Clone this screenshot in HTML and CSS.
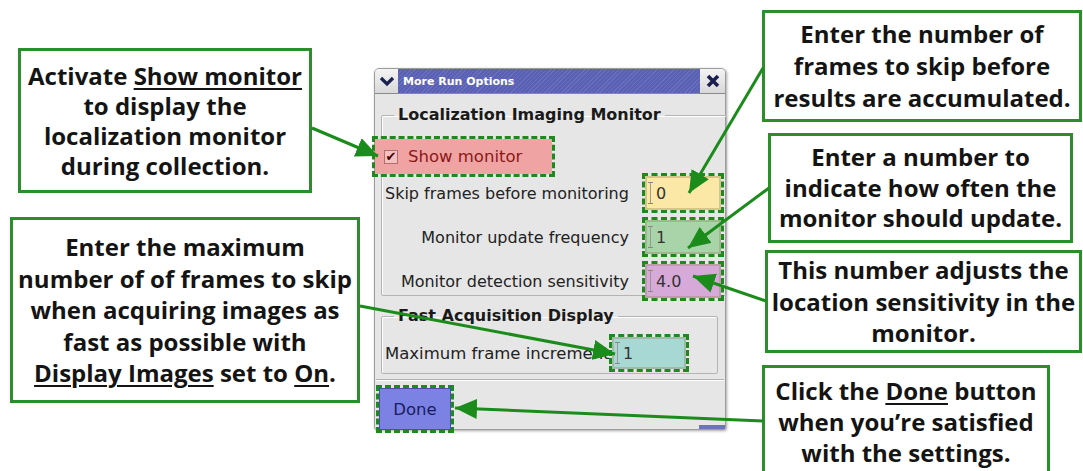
FILE: index.html
```html
<!DOCTYPE html>
<html lang="en">
  <head>
    <meta charset="UTF-8" />
    <meta name="viewport" content="width=device-width, initial-scale=1.0" />
    <title>More Run Options</title>
    <link rel="stylesheet" href="styles.css">
  </head>
  <body>
    <div class="canvas">
      <div class="dialog">
        <div class="titlebar">
          <span class="tb-btn">
            <svg width="16" height="12" viewBox="0 0 16 12"><path d="M2 3 L8 9 L14 3" fill="none" stroke="#1c2050" stroke-width="3.2"/></svg>
          </span>
          <span class="title">More Run Options</span>
          <span class="tb-btn close">
            <svg width="14" height="14" viewBox="0 0 14 14"><path d="M2 2 L12 12 M12 2 L2 12" stroke="#1c2050" stroke-width="3.6"/></svg>
          </span>
        </div>
        <div class="body">
          <fieldset class="group">
            <legend>Localization Imaging Monitor</legend>
            <label class="check mark pink"><span class="box">&#10004;</span>Show monitor</label>
            <div class="rows">
              <span class="lbl">Skip frames before monitoring</span>
              <span class="field mark yellow"><i class="caret"></i>0</span>
              <span class="lbl">Monitor update frequency</span>
              <span class="field mark green"><i class="caret"></i>1</span>
              <span class="lbl">Monitor detection sensitivity</span>
              <span class="field mark purple"><i class="caret"></i>4.0</span>
            </div>
          </fieldset>
          <fieldset class="group second">
            <legend>Fast Acquisition Display</legend>
            <div class="inline-row">
              <span class="lbl wide">Maximum frame increment</span>
              <span class="field mark teal small"><i class="caret"></i>1</span>
            </div>
          </fieldset>
          <div class="sep"></div>
          <div class="actions">
            <button class="done mark">Done</button>
          </div>
        </div>
        <span class="grip"></span>
      </div>

      <div class="callout c1"><p>Activate <u>Show monitor</u><br>to display the<br>localization monitor<br>during collection.</p></div>
      <div class="callout c2"><p>Enter the maximum<br>number of of frames to skip<br>when acquiring images as<br>fast as possible with<br><u>Display Images</u> set to <u>On</u>.</p></div>
      <div class="callout c3"><p>Enter the number of<br>frames to skip before<br>results are accumulated.</p></div>
      <div class="callout c4"><p>Enter a number to<br>indicate how often the<br>monitor should update.</p></div>
      <div class="callout c5"><p>This number adjusts the<br>location sensitivity in the<br>monitor.</p></div>
      <div class="callout c6"><p>Click the <u>Done</u> button<br>when you&rsquo;re satisfied<br>with the settings.</p></div>

      <svg class="arrows" width="1083" height="471" viewBox="0 0 1083 471">
        <defs>
          <marker id="head" markerUnits="userSpaceOnUse" markerWidth="24" markerHeight="20" refX="22" refY="10" orient="auto">
            <path d="M0 0 L22 10 L0 20 Z" fill="#1b8c1b"/>
          </marker>
        </defs>
        <g stroke="#1b8c1b" stroke-width="3" fill="none" marker-end="url(#head)">
          <line x1="312" y1="128" x2="378" y2="156"/>
          <line x1="763" y1="68" x2="689" y2="193"/>
          <line x1="769" y1="188" x2="688" y2="248"/>
          <line x1="766" y1="301" x2="693" y2="276"/>
          <line x1="360" y1="306" x2="615" y2="354"/>
          <line x1="763" y1="421" x2="455" y2="408"/>
        </g>
      </svg>
    </div>
  </body>
</html>
```

FILE: styles.css
```css
* {
  box-sizing: border-box;
}
body {
  margin: 0;
  background: #fff;
}
.canvas {
  position: relative;
  width: 1083px;
  height: 471px;
  overflow: hidden;
  background: #fff;
}

/* dialog */
.dialog {
  position: absolute;
  left: 374px;
  top: 68px;
  width: 352px;
  height: 362px;
  background: #e6e6e6;
  border: 1px solid #9c9c9c;
  border-radius: 5px 5px 3px 3px;
  box-shadow: 1px 1px 3px rgba(0, 0, 0, 0.35);
  font-family: "DejaVu Sans", sans-serif;
}
.titlebar {
  display: flex;
  height: 25px;
  border-bottom: 1px solid #8a8a8a;
}
.tb-btn {
  display: flex;
  align-items: center;
  justify-content: center;
  width: 23px;
  background: linear-gradient(#f4f4f4, #d8d8d8);
  border-radius: 4px 0 0 0;
}
.tb-btn.close {
  width: 25px;
  border-radius: 0 4px 0 0;
}
.title {
  flex: 1;
  display: flex;
  align-items: center;
  padding-left: 5px;
  color: #fff;
  font-size: 11px;
  font-weight: bold;
  background-color: #5a61b4;
  background-image: repeating-linear-gradient(135deg, rgba(255, 255, 255, 0.09) 0 1px, transparent 1px 3px);
}
.body {
  padding: 10px 7px 0 6px;
}
.group {
  margin: 0;
  padding: 13px 5px 0 3px;
  border: 1px solid #b4b4b4;
  box-shadow: inset 1px 1px 0 #fff;
  border-radius: 2px;
}
.group legend {
  margin-left: 9px;
  padding: 0 4px;
  font-size: 16px;
  line-height: 22px;
  font-weight: bold;
  color: #1a1a1a;
}
.mark {
  outline: 3px dashed #1e8a1e;
}
.check {
  display: flex;
  align-items: center;
  gap: 10px;
  width: 177px;
  height: 35px;
  margin-left: -10px;
  padding-left: 9px;
  background: #f0a3a3;
  color: #8a1818;
  font-size: 16.5px;
}
.box {
  display: flex;
  align-items: center;
  justify-content: center;
  width: 14px;
  height: 14px;
  border: 1px solid #b07070;
  background: #f6c0c0;
  color: #4a0000;
  font-size: 13px;
  line-height: 1;
}
.rows {
  display: grid;
  grid-template-columns: auto 76px;
  column-gap: 16px;
  row-gap: 10px;
  align-items: center;
  margin: 2px 0 -3px;
}
.lbl {
  justify-self: end;
  font-size: 16px;
  color: #222;
  white-space: nowrap;
}
.lbl.wide {
  font-size: 16.5px;
}
.field {
  display: flex;
  align-items: center;
  gap: 3px;
  height: 34px;
  padding-left: 3px;
  font-size: 16px;
  color: #333;
  box-shadow: inset 0 0 0 2px rgba(150, 130, 90, 0.35);
}
.caret {
  display: block;
  width: 5px;
  height: 22px;
  border-top: 1px solid #888;
  border-bottom: 1px solid #888;
  background: linear-gradient(#999, #999) center / 1px 100% no-repeat;
}
.yellow { background: #fbe8a6; }
.green { background: #a9d4a9; }
.purple { background: #d7a9d8; }
.teal { background: #a8d8d4; }
.field.small {
  width: 74px;
  height: 32px;
  margin-left: auto;
}
.group.second {
  margin-top: 9px;
  padding: 10px 5px 4px 3px;
}
.inline-row {
  display: flex;
  align-items: center;
  padding-right: 26px;
}
.sep {
  margin: 5px -6px 0 -5px;
  border-top: 1px solid #b0b0b0;
  border-bottom: 1px solid #fff;
}
.actions {
  padding-top: 7px;
}
.done {
  display: block;
  width: 72px;
  height: 42px;
  margin-left: -2px;
  background: #7b82e4;
  border: 1px solid #4a4fae;
  color: #1a1c5c;
  font-family: "DejaVu Sans", sans-serif;
  font-size: 16.5px;
  padding: 0;
}
.grip {
  position: absolute;
  right: 0;
  bottom: 0;
  width: 26px;
  height: 4px;
  background: #6d73c0;
}

/* callouts */
.callout {
  position: absolute;
  display: flex;
  align-items: center;
  justify-content: center;
  text-align: center;
  background: #fff;
  border: 3px solid #2a8f2a;
  font-family: "Open Sans", "Liberation Sans", sans-serif;
  font-weight: bold;
  font-size: 24px;
  color: #141414;
}
.callout p {
  margin: 0;
  white-space: nowrap;
}
.callout u {
  text-decoration-thickness: 2px;
  text-underline-offset: 3px;
}
.c1 {
  left: 18px;
  top: 48px;
  width: 294px;
  height: 145px;
  line-height: 30px;
}
.c2 {
  left: 10px;
  top: 217px;
  width: 350px;
  height: 186px;
  line-height: 31.5px;
}
.c3 {
  left: 762px;
  top: 10px;
  width: 320px;
  height: 112px;
  line-height: 32px;
}
.c4 {
  left: 768px;
  top: 133px;
  width: 305px;
  height: 110px;
  line-height: 30.5px;
}
.c5 {
  left: 765px;
  top: 250px;
  width: 317px;
  height: 103px;
  line-height: 31.5px;
}
.c6 {
  left: 762px;
  top: 365px;
  width: 288px;
  height: 130px;
  align-items: flex-start;
  padding-top: 7px;
  line-height: 31px;
}
.arrows {
  position: absolute;
  left: 0;
  top: 0;
  pointer-events: none;
}
```
